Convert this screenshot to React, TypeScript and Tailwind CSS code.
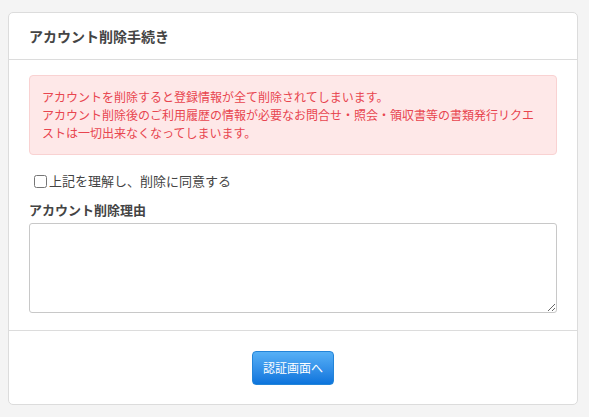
export default function App() {
  return (
    <div className="min-h-[417px] bg-[#f4f4f4] pt-3 pl-2 font-['Noto_Sans_CJK_JP','Noto_Sans',sans-serif] text-[#444]">
      <div className="w-[570px] rounded-[5px] border border-[#dcdcdc] bg-white">
        <div className="border-b border-[#dcdcdc] px-5 py-3">
          <h1 className="text-[14px] leading-[22px] font-bold">アカウント削除手続き</h1>
        </div>

        <div className="px-5 pt-[15px] pb-[17px]">
          <div className="rounded-[4px] border border-[#f9d2d2] bg-[#fee8e8] px-3 py-3 text-[12px] leading-[18px] text-[#e8454f]">
            <p>アカウントを削除すると登録情報が全て削除されてしまいます。</p>
            <p>
              アカウント削除後のご利用履歴の情報が必要なお問合せ・照会・領収書等の書類発行リクエストは一切出来なくなってしまいます。
            </p>
          </div>

          <label className="mt-4 flex h-5 items-center pl-[5px] text-[13px] leading-5">
            <input type="checkbox" className="m-0 mr-[2px] h-[13px] w-[13px]" />
            上記を理解し、削除に同意する
          </label>

          <div className="mt-[9px] text-[13px] leading-5 font-bold">アカウント削除理由</div>
          <textarea className="mt-[3px] block h-[90px] w-full rounded-[3px] border border-[#c8c8c8] px-2 py-1 text-[13px] outline-none" />
        </div>

        <div className="flex justify-center border-t border-[#dcdcdc] pt-5 pb-[19px]">
          <button className="h-[34px] w-[82px] rounded-[4px] border border-[#2384d8] bg-gradient-to-b from-[#56b0f6] to-[#0a74dc] text-[12px] text-white">
            認証画面へ
          </button>
        </div>
      </div>
    </div>
  );
}
